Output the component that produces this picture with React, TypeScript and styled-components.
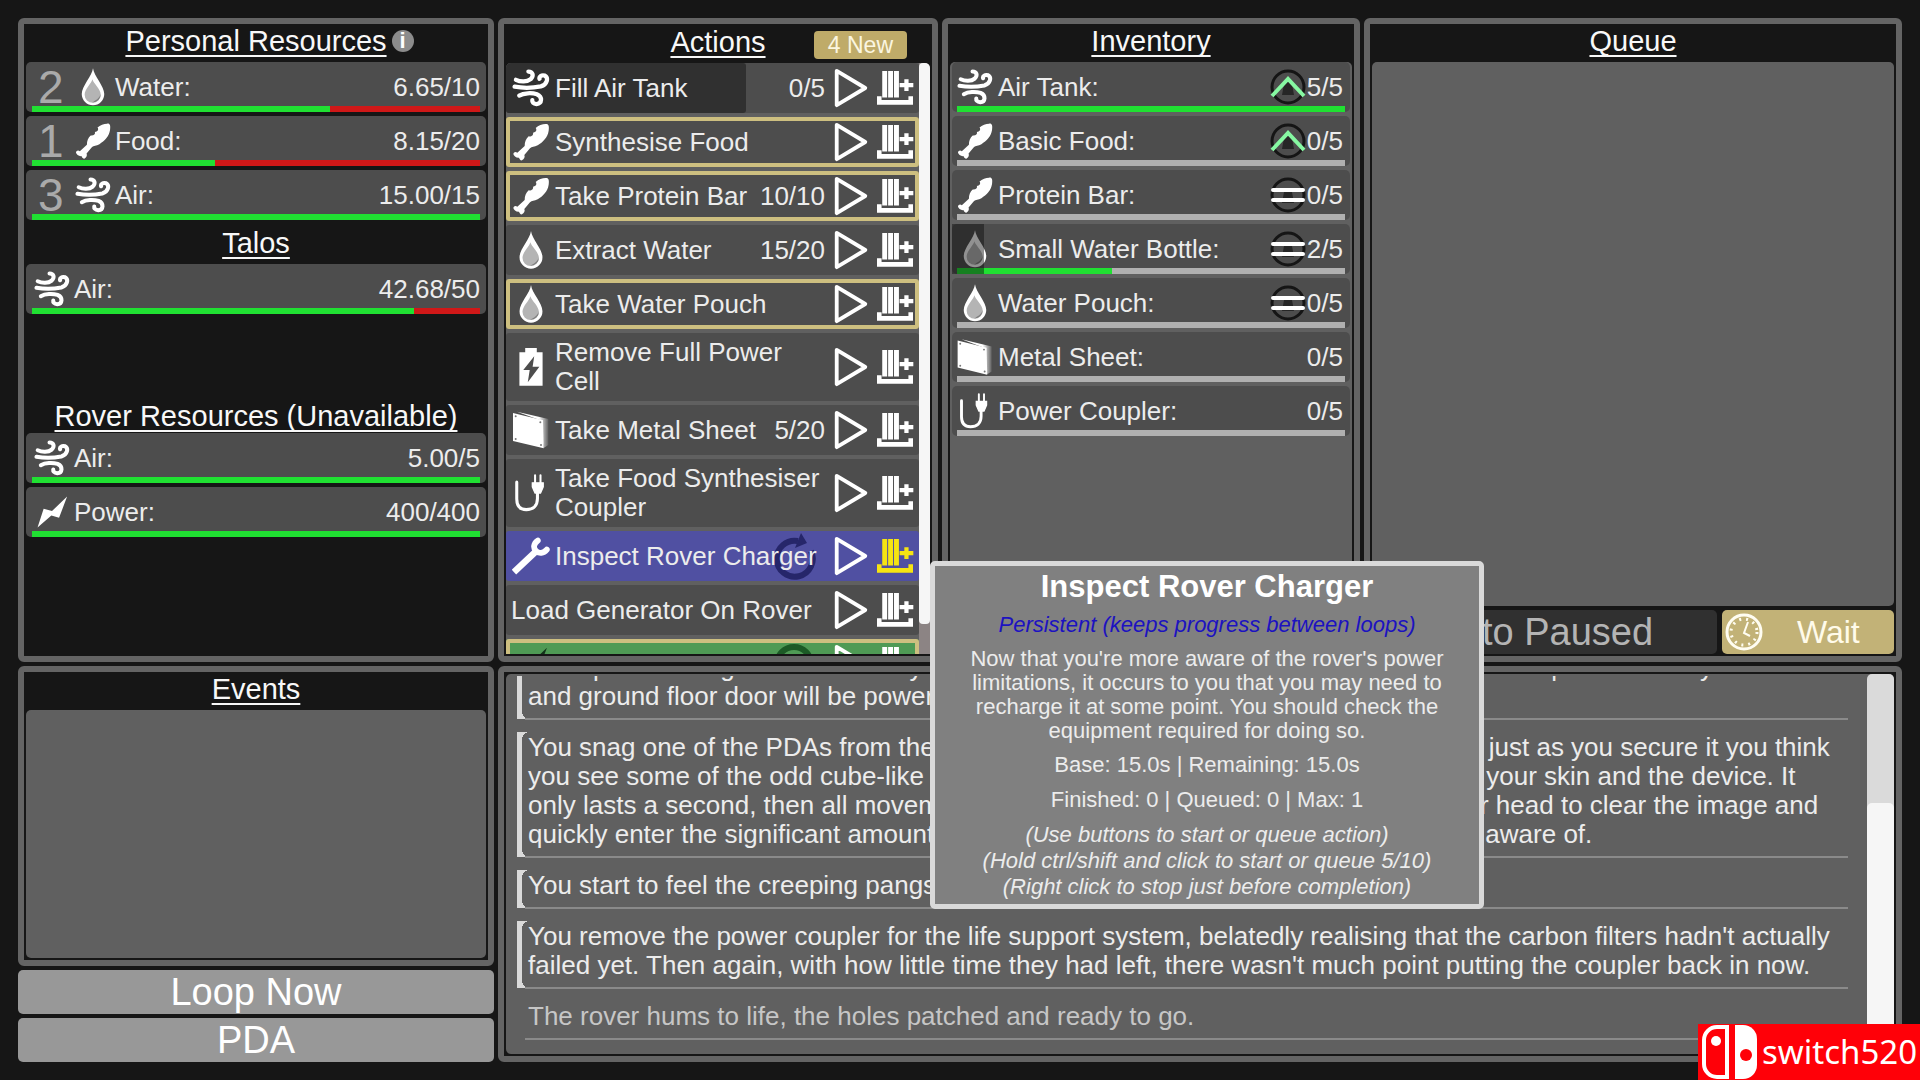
import React from "react";
import styled, { createGlobalStyle, css } from "styled-components";

const color = {
  page: "#161616",
  frame: "#646464",
  well: "#606060",
  row: "#4d4d4d",
  rowDark: "#303030",
  text: "#ececec",
  dim: "#aaaaaa",
  gold: "#c2b277",
  goldEdge: "#cdbf80",
  good: "#20e032",
  bad: "#d01818",
};

const GlobalStyle = createGlobalStyle`
  *, *::before, *::after { box-sizing: border-box; }
  body {
    margin: 0;
    background: ${color.page};
    color: ${color.text};
    font-family: "Liberation Sans", Arial, sans-serif;
    font-size: 26px;
    line-height: 29px;
    overflow: hidden;
  }
  button { font: inherit; color: inherit; border: 0; padding: 0; background: none; cursor: pointer; }
  ul { list-style: none; margin: 0; padding: 0; }
  h2, p { margin: 0; font-weight: normal; }
`;

/* ---------- icons ---------- */

type IconName = "water" | "food" | "air" | "power" | "battery" | "sheet" | "plug" | "wrench";

const Svg = styled.svg`
  display: block;
  width: 100%;
  height: 100%;
`;

const Drop = () => (
  <Svg viewBox="-20 0 112 116">
    <path d="M36 0C39 25 71 55 71 80A35 35 0 0 1 1 80C1 55 33 25 36 0Z" fill="#fff" />
    <path d="M34 34C38 48 60 64 60 82A25 25 0 0 1 10 82C10 64 31 48 34 34Z" fill="#b4b4b4" />
    <path d="M60 80A25 25 0 0 1 34 106C44 100 56 94 60 80Z" fill="#7d7d7d" />
  </Svg>
);

const Food = () => (
  <Svg viewBox="-2 -1 112 114">
    <path
      fill="#fff"
      d="M98 2C107 1 109 8 107 22C104 42 90 56 74 66C64 72 56 70 51 75L34 95C37 101 33 108 27 111C22 112 20 107 18 103C10 104 2 98 1 92C2 86 8 84 13 88L35 68C35 56 39 46 47 39C56 40 62 35 60 28C68 27 73 21 68 14C76 6 88 2 98 2Z"
    />
  </Svg>
);

const Air = () => (
  <Svg viewBox="-2 -1 116 116" fill="none" stroke="#fff" strokeWidth="13" strokeLinecap="round">
    <path d="M10 32C24 39 44 39 55 30C66 19 61 7 48 7" />
    <path d="M6 53C34 58 66 56 86 52C106 46 110 26 98 19C88 16 80 22 82 29" />
    <path d="M20 80C34 72 58 71 74 76C92 84 90 105 73 106C63 105 59 100 60 94" />
  </Svg>
);

const Power = ({ fill = "#fff" }: { fill?: string }) => (
  <Svg viewBox="-10 -5 112 106">
    <path fill={fill} d="M93 0L68 66L44 59L1 96L20 38L46 45Z" />
  </Svg>
);

const Battery = () => (
  <Svg viewBox="-20 0 112 118">
    <path fill="#fff" d="M18 0H54V13H72V117H0V13H18Z" />
    <path fill={color.row} d="M46 26L12 68H32L26 106L62 58H41Z" />
  </Svg>
);

const Sheet = () => (
  <Svg viewBox="0 0 112 114">
    <defs>
      <linearGradient id="sheetEdge" x1="0" x2="1">
        <stop offset="0.7" stopColor="#fff" />
        <stop offset="1" stopColor="#fff" stopOpacity="0.1" />
      </linearGradient>
    </defs>
    <path fill="url(#sheetEdge)" d="M14 2L108 24V102L94 111L84 28Z" />
    <path fill="#fff" d="M2 6L92 28L94 112L2 90Z" />
    {[[10, 16], [84, 34], [10, 84], [86, 102]].map(([x, y]) => (
      <circle key={`${x}-${y}`} cx={x} cy={y} r="3" fill="#777" />
    ))}
  </Svg>
);

const Plug = () => (
  <Svg viewBox="-8 -2 112 112" fill="none" stroke="#fff" strokeLinecap="round">
    <path strokeWidth="9" d="M6 22V72C6 94 16 103 34 103C54 103 67 92 67 70V50" />
    <path fill="#fff" strokeWidth="4" d="M52 24H84V36L76 54H60L52 36Z" />
    <path strokeWidth="6" d="M60 2V24M76 2V24" />
  </Svg>
);

const Wrench = () => (
  <Svg viewBox="0 0 118 116" fill="none" stroke="#fff" strokeLinecap="round" strokeLinejoin="round">
    <path strokeWidth="20" strokeLinecap="butt" d="M6 108L72 46" />
    <path strokeWidth="18" d="M80 10C66 20 66 34 74 42C84 52 98 50 108 38" />
  </Svg>
);

const glyphs: Record<IconName, React.FC> = {
  water: Drop,
  food: Food,
  air: Air,
  power: () => <Power />,
  battery: Battery,
  sheet: Sheet,
  plug: Plug,
  wrench: Wrench,
};

const PlayIcon = () => (
  <Svg viewBox="0 0 36 42">
    <path d="M3 3L33 21L3 39Z" fill="none" stroke="#fff" strokeWidth="4" strokeLinejoin="round" />
  </Svg>
);

const EnqueueIcon = ({ tint = "#fff" }: { tint?: string }) => (
  <Svg viewBox="0 0 112 110">
    <path fill={tint} d="M17 3H32V84H17ZM35 3H50V84H35ZM53 3H68V84H53Z" />
    <path d="M70 46H112M91 28V64" stroke={tint} strokeWidth="13" />
    <path d="M8 80V99H104V80" fill="none" stroke={tint} strokeWidth="14" />
  </Svg>
);

const RepeatIcon = () => (
  <Svg viewBox="0 0 44 50">
    <path d="M39 20A18 18 0 1 1 26 10" fill="none" stroke="#26266a" strokeWidth="6" />
    <path d="M29 2L35 12L23 17Z" fill="#26266a" />
  </Svg>
);

const LoopedIcon = () => (
  <Svg viewBox="0 0 44 50">
    <circle cx="22" cy="25" r="17" fill="none" stroke="#1c5a26" strokeWidth="6" />
  </Svg>
);

const TrendIcon = ({ rising }: { rising: boolean }) => (
  <Svg viewBox="0 0 36 36">
    <circle cx="18" cy="18" r="16" fill="none" stroke="#151515" strokeWidth="3" />
    <path d="M14 15A4 4 0 0 1 22 15L24 26H12Z" fill="#262626" />
    {rising ? (
      <path d="M2 27L18 10L34 27" fill="none" stroke="#86f8a2" strokeWidth="4" />
    ) : (
      <path d="M3 13H33M3 23H33" stroke="#fff" strokeWidth="4" strokeLinecap="round" />
    )}
  </Svg>
);

const ClockIcon = () => (
  <Svg viewBox="0 0 38 38" fill="none" stroke="#fffdf2">
    <circle cx="19" cy="19" r="17" strokeWidth="3" />
    <circle cx="19" cy="19" r="13" strokeWidth="3" strokeDasharray="2 5" />
    <path d="M23 9L19 20L25 23" strokeWidth="2" />
  </Svg>
);

/* ---------- layout ---------- */

const Page = styled.div`
  position: relative;
  display: grid;
  grid-template-columns: minmax(0, 476fr) minmax(0, 1404fr);
  grid-template-rows: minmax(0, 644fr) minmax(0, 396fr);
  gap: 4px;
  height: 100vh;
  padding: 18px;
`;

const TopColumns = styled.div`
  display: grid;
  grid-template-columns: minmax(0, 440fr) minmax(0, 418fr) minmax(0, 538fr);
  gap: 4px;
`;

const SideColumn = styled.div`
  display: flex;
  flex-direction: column;
  gap: 4px;
`;

const Panel = styled.section`
  display: flex;
  flex: 1;
  flex-direction: column;
  min-height: 0;
  padding: 0 2px 2px;
  background: ${color.page};
  border: 6px solid ${color.frame};
  border-radius: 6px;
`;

const HeadingRow = styled.div<{ $compact?: boolean }>`
  display: grid;
  grid-template-columns: 1fr auto 1fr;
  align-items: center;
  padding-bottom: ${(p) => (p.$compact ? 0 : 4)}px;
`;

const Heading = styled.h2`
  grid-column: 2;
  color: #f8f8f8;
  font-size: 29px;
  line-height: 34px;
  text-decoration: underline;
  text-decoration-thickness: 2px;
  text-underline-offset: 4px;
  text-decoration-skip-ink: none;
`;

const InfoButton = styled.button`
  width: 22px;
  height: 22px;
  margin-left: 5px;
  border-radius: 50%;
  background: #8c8c8c;
  color: #fff;
  font-size: 22px;
  font-weight: bold;
  line-height: 22px;
`;

const NewBadge = styled.button`
  justify-self: end;
  height: 28px;
  margin: 7px 23px 0 0;
  padding: 0 14px;
  border-radius: 4px;
  background: #bfab69;
  color: #fbf6e0;
  font-size: 23px;
  line-height: 28px;
`;

const Well = styled.div`
  flex: 1;
  min-height: 0;
  background: ${color.well};
  border-radius: 5px;
`;

const IconBox = styled.span`
  flex: none;
  width: 36px;
  height: 38px;
`;

/* ---------- resources ---------- */

const ResourceGroup = styled.section<{ $roomy?: boolean }>`
  ${(p) => p.$roomy && css`
    min-height: 179px;
    padding-top: 6px;
  `}
`;

const MeterList = styled.ul`
  display: flex;
  flex-direction: column;
  gap: 4px;
`;

const MeterRow = styled.li`
  position: relative;
  display: flex;
  flex-direction: column;
  padding: 6px 6px 0;
  background: ${color.row};
  border-radius: 5px;
`;

const MeterContent = styled.div`
  display: flex;
  align-items: center;
  gap: 4px;
  height: 38px;
  padding-left: 2px;
`;

const Priority = styled.span`
  width: 37px;
  padding-left: 4px;
  color: ${color.dim};
  font-size: 46px;
  line-height: 38px;
`;

const Label = styled.span`
  flex: 1;
`;

const Meter = styled.div<{ $rest: string }>`
  height: 6px;
  background: ${(p) => p.$rest};
`;

const MeterFill = styled.div`
  height: 100%;
  background: ${color.good};
`;

interface Resource {
  name: string;
  icon: IconName;
  value: string;
  share: number;
  priority?: number;
}

const ResourceRow = ({ name, icon, value, share, priority }: Resource) => {
  const Glyph = glyphs[icon];
  return (
    <MeterRow>
      <MeterContent>
        {priority && <Priority>{priority}</Priority>}
        <IconBox><Glyph /></IconBox>
        <Label>{name}:</Label>
        <span>{value}</span>
      </MeterContent>
      <Meter $rest={color.bad}>
        <MeterFill style={{ width: `${share * 100}%` }} />
      </Meter>
    </MeterRow>
  );
};

const personal: Resource[] = [
  { name: "Water", icon: "water", value: "6.65/10", share: 0.665, priority: 2 },
  { name: "Food", icon: "food", value: "8.15/20", share: 0.4075, priority: 1 },
  { name: "Air", icon: "air", value: "15.00/15", share: 1, priority: 3 },
];
const talos: Resource[] = [{ name: "Air", icon: "air", value: "42.68/50", share: 0.8536 }];
const rover: Resource[] = [
  { name: "Air", icon: "air", value: "5.00/5", share: 1 },
  { name: "Power", icon: "power", value: "400/400", share: 1 },
];

/* ---------- actions ---------- */

const ScrollArea = styled.div`
  display: flex;
  flex: 1;
  min-height: 0;
  overflow: hidden;
  background: ${color.well};
  border-radius: 5px 5px 0 0;
`;

const ActionList = styled.ul`
  display: flex;
  flex: 1;
  flex-direction: column;
  gap: 4px;
  overflow: hidden;
`;

const tones = { plain: color.row, active: "#5050a2", done: "#4f9a55" };

const ActionRow = styled.li<{ $tone: keyof typeof tones; $fresh?: boolean }>`
  position: relative;
  display: flex;
  flex: none;
  align-items: center;
  gap: 4px;
  min-height: 50px;
  padding: 5px;
  background: ${(p) => tones[p.$tone]};
  border-radius: 3px;
  ${(p) => p.$fresh && css`box-shadow: inset 0 0 0 4px ${color.goldEdge};`}
`;

const ActionProgress = styled.div`
  position: absolute;
  inset: 0 auto 0 0;
  background: ${color.rowDark};
  border-radius: 3px;
`;

const RepeatMark = styled.span`
  position: absolute;
  top: 0;
  right: 103px;
  width: 44px;
  height: 50px;
`;

const ActionIcon = styled(IconBox)`
  position: relative;
  width: 38px;
  margin: 0 1px;
`;

const ActionLabel = styled(Label)`
  position: relative;
`;

const ActionCount = styled.span`
  position: relative;
`;

const PlayButton = styled.button`
  flex: none;
  width: 36px;
  height: 40px;
  margin-left: 4px;
`;

const EnqueueButton = styled.button`
  flex: none;
  width: 38px;
  height: 36px;
  margin-left: 3px;
`;

const ActionScroll = styled.div`
  width: 11px;
  background: #8c8484;
`;

const ActionThumb = styled.div`
  height: 95%;
  background: #f6f6f6;
  border-radius: 4px;
`;

interface Action {
  name: string;
  icon?: IconName;
  count?: string;
  fresh?: boolean;
  progress?: number;
  tone?: keyof typeof tones;
}

const actions: Action[] = [
  { name: "Fill Air Tank", icon: "air", count: "0/5", progress: 0.58 },
  { name: "Synthesise Food", icon: "food", fresh: true },
  { name: "Take Protein Bar", icon: "food", count: "10/10", fresh: true },
  { name: "Extract Water", icon: "water", count: "15/20" },
  { name: "Take Water Pouch", icon: "water", fresh: true },
  { name: "Remove Full Power Cell", icon: "battery" },
  { name: "Take Metal Sheet", icon: "sheet", count: "5/20" },
  { name: "Take Food Synthesiser Coupler", icon: "plug" },
  { name: "Inspect Rover Charger", icon: "wrench", tone: "active" },
  { name: "Load Generator On Rover" },
];

const ActionItem = ({ name, icon, count, fresh, progress, tone = "plain" }: Action) => {
  const Glyph = icon && glyphs[icon];
  const active = tone === "active";
  return (
    <ActionRow $tone={tone} $fresh={fresh}>
      {progress && <ActionProgress style={{ width: `${progress * 100}%` }} />}
      {active && <RepeatMark><RepeatIcon /></RepeatMark>}
      {Glyph && <ActionIcon><Glyph /></ActionIcon>}
      <ActionLabel>{name}</ActionLabel>
      {count && <ActionCount>{count}</ActionCount>}
      <PlayButton aria-label={`Start ${name}`}><PlayIcon /></PlayButton>
      <EnqueueButton aria-label={`Queue ${name}`}>
        <EnqueueIcon tint={active ? "#f6e412" : undefined} />
      </EnqueueButton>
    </ActionRow>
  );
};

/* ---------- inventory ---------- */

const InventoryWell = styled(Well)`
  padding: 0 2px;
`;

const InventoryRow = styled(MeterRow)`
  padding: 6px 5px 0;
`;

const InventoryContent = styled(MeterContent)`
  gap: 5px;
  padding: 0 2px 0 0;
`;

const Trend = styled.span`
  width: 36px;
  height: 36px;
  margin-right: -4px;
`;

const UseProgress = styled.div`
  position: absolute;
  inset: 0 auto 0 0;
  background: rgba(10, 10, 10, 0.45);
`;

interface Item {
  name: string;
  icon: IconName;
  held: number;
  trend?: "up" | "flat";
  using?: number;
}

const items: Item[] = [
  { name: "Air Tank", icon: "air", held: 5, trend: "up" },
  { name: "Basic Food", icon: "food", held: 0, trend: "up" },
  { name: "Protein Bar", icon: "food", held: 0, trend: "flat" },
  { name: "Small Water Bottle", icon: "water", held: 2, trend: "flat", using: 0.08 },
  { name: "Water Pouch", icon: "water", held: 0, trend: "flat" },
  { name: "Metal Sheet", icon: "sheet", held: 0 },
  { name: "Power Coupler", icon: "plug", held: 0 },
];

const InventoryItem = ({ name, icon, held, trend, using }: Item) => {
  const Glyph = glyphs[icon];
  return (
    <InventoryRow>
      <InventoryContent>
        <IconBox><Glyph /></IconBox>
        <Label>{name}:</Label>
        {trend && <Trend><TrendIcon rising={trend === "up"} /></Trend>}
        <span>{held}/5</span>
      </InventoryContent>
      <Meter $rest="#b0b0b0">
        <MeterFill style={{ width: `${(held / 5) * 100}%` }} />
      </Meter>
      {using && <UseProgress style={{ width: `${using * 100}%` }} />}
    </InventoryRow>
  );
};

/* ---------- queue ---------- */

const QueueControls = styled.div`
  display: grid;
  grid-template-columns: 2fr 1fr;
  gap: 5px;
  height: 44px;
  margin-top: 4px;
`;

const PauseButton = styled.button`
  border-radius: 5px;
  background: ${color.rowDark};
  color: #b4b4b4;
  font-size: 38px;
  line-height: 44px;
`;

const WaitButton = styled.button`
  display: flex;
  align-items: center;
  padding-left: 3px;
  border-radius: 5px;
  background: ${color.gold};
  color: #fffbea;
  font-size: 32px;
`;

const ClockBox = styled.span`
  width: 38px;
  height: 38px;
`;

/* ---------- side buttons ---------- */

const WideButton = styled.button`
  height: 44px;
  border-radius: 5px;
  background: #989898;
  color: #fff;
  font-size: 38px;
  line-height: 42px;
`;

/* ---------- log ---------- */

const LogPanel = styled(Panel)`
  flex-direction: row;
  padding: 2px;
`;

const LogArea = styled(Well)`
  display: flex;
  border-radius: 5px;
`;

const LogEntries = styled.div`
  display: flex;
  flex: 1;
  flex-direction: column;
  justify-content: flex-end;
  overflow: hidden;
  margin-top: 2px;
  padding: 0 19px 16px 11px;
`;

const LogEntry = styled.article<{ $unread?: boolean }>`
  position: relative;
  flex: none;
  margin-top: 14px;
  padding: 1px 0 7px 11px;
  color: ${(p) => (p.$unread ? color.text : "#c6c6c6")};

  &::after {
    content: "";
    position: absolute;
    inset: auto 0 -2px 8px;
    height: 2px;
    background: #8a8a8a;
  }

  ${(p) => p.$unread && css`
    &::before {
      content: "";
      position: absolute;
      inset: 0 auto -1px 0;
      width: 13px;
      background: radial-gradient(ellipse 8px 7px at 13px 7px, ${color.well} 98%, transparent) 0 0 / 13px 7px no-repeat,
        radial-gradient(ellipse 8px 7px at 13px 0, ${color.well} 98%, transparent) 0 100% / 13px 7px no-repeat,
        linear-gradient(90deg, #dadada 5px, ${color.well} 5px) 0 7px / 100% calc(100% - 14px) no-repeat,
        #dadada;
    }
  `}
`;

const LogText = styled.p`
  position: relative;
  white-space: pre-line;
`;

const LogScroll = styled.div`
  display: flex;
  flex: none;
  flex-direction: column;
  justify-content: flex-end;
  width: 27px;
  background: #dadada;
  border-radius: 5px;
`;

const LogThumb = styled.div`
  height: 66%;
  background: #f6f6f6;
  border-radius: 5px 5px 0 0;
`;

const log = [
  {
    unread: true,
    text: `The spare casting should securely hold the blocks in place while you reconnect the main power entirely
and ground floor door will be powered for now.`,
  },
  {
    unread: true,
    text: `You snag one of the PDAs from the benches, strapping it to your suit's forearm, but just as you secure it you think
you see some of the odd cube-like shapes in your mind, suddenly moving between your skin and the device. It
only lasts a second, then all movement around them stops abruptly. You shake your head to clear the image and
quickly enter the significant amount of information on the facility that you're already aware of.`,
  },
  { unread: true, text: "You start to feel the creeping pangs of hunger." },
  {
    unread: true,
    text: `You remove the power coupler for the life support system, belatedly realising that the carbon filters hadn't actually
failed yet. Then again, with how little time they had left, there wasn't much point putting the coupler back in now.`,
  },
  { unread: false, text: "The rover hums to life, the holes patched and ready to go." },
];

/* ---------- overlays ---------- */

const Tooltip = styled.aside`
  position: absolute;
  left: 930px;
  top: 561px;
  display: flex;
  flex-direction: column;
  gap: 9px;
  width: 554px;
  padding: 4px 26px;
  background: #808080;
  border: 5px solid #d9d9d9;
  border-radius: 5px;
  font-size: 22px;
  line-height: 26px;
  text-align: center;
`;

const TooltipTitle = styled.h2`
  color: #fff;
  font-size: 31px;
  font-weight: bold;
  line-height: 33px;
`;

const Persistent = styled.p`
  color: #1c12c0;
  font-style: italic;
`;

const Description = styled.p`
  line-height: 24px;
`;

const Hints = styled.p`
  font-style: italic;
  white-space: pre-line;
`;

const Watermark = styled.div`
  position: fixed;
  right: 0;
  bottom: 0;
  display: flex;
  align-items: center;
  gap: 4px;
  width: 222px;
  height: 56px;
  padding-left: 4px;
  background: #ff0008;
  color: #fff;
  font-family: "Noto Sans", "Open Sans", sans-serif;
  font-size: 33px;
  line-height: 56px;
`;

const LogoBox = styled.span`
  flex: none;
  width: 56px;
  height: 54px;
`;

const SwitchLogo = () => (
  <Svg viewBox="0 0 56 54">
    <path d="M25 2H15A13 13 0 0 0 2 15V39A13 13 0 0 0 15 52H25Z" fill="none" stroke="#fff" strokeWidth="4" />
    <circle cx="14" cy="16" r="5" fill="#fff" />
    <path d="M33 0H41A14 14 0 0 1 55 14V40A14 14 0 0 1 41 54H33Z" fill="#fff" />
    <circle cx="44" cy="30" r="6" fill="#ff0008" />
  </Svg>
);

export default function App() {
  return (
    <>
      <GlobalStyle />
      <Page>
        <Panel>
          <ResourceGroup>
            <HeadingRow>
              <Heading>Personal Resources</Heading>
              <InfoButton aria-label="About personal resources">i</InfoButton>
            </HeadingRow>
            <MeterList>{personal.map((r) => <ResourceRow key={r.name} {...r} />)}</MeterList>
          </ResourceGroup>
          <ResourceGroup $roomy>
            <HeadingRow><Heading>Talos</Heading></HeadingRow>
            <MeterList>{talos.map((r) => <ResourceRow key={r.name} {...r} />)}</MeterList>
          </ResourceGroup>
          <ResourceGroup>
            <HeadingRow $compact><Heading>Rover Resources (Unavailable)</Heading></HeadingRow>
            <MeterList>{rover.map((r) => <ResourceRow key={r.name} {...r} />)}</MeterList>
          </ResourceGroup>
        </Panel>

        <TopColumns>
          <Panel>
            <HeadingRow>
              <Heading>Actions</Heading>
              <NewBadge>4 New</NewBadge>
            </HeadingRow>
            <ScrollArea>
              <ActionList>
                {actions.map((a) => <ActionItem key={a.name} {...a} />)}
                <ActionRow $tone="done" $fresh>
                  <RepeatMark><LoopedIcon /></RepeatMark>
                  <ActionIcon><Power fill="#12331a" /></ActionIcon>
                  <ActionLabel />
                  <PlayButton aria-label="Start charging"><PlayIcon /></PlayButton>
                  <EnqueueButton aria-label="Queue charging"><EnqueueIcon /></EnqueueButton>
                </ActionRow>
              </ActionList>
              <ActionScroll><ActionThumb /></ActionScroll>
            </ScrollArea>
          </Panel>
          <Panel>
            <HeadingRow><Heading>Inventory</Heading></HeadingRow>
            <InventoryWell>
              <MeterList>{items.map((i) => <InventoryItem key={i.name} {...i} />)}</MeterList>
            </InventoryWell>
          </Panel>
          <Panel>
            <HeadingRow><Heading>Queue</Heading></HeadingRow>
            <Well />
            <QueueControls>
              <PauseButton>Auto Paused</PauseButton>
              <WaitButton>
                <ClockBox><ClockIcon /></ClockBox>
                <Label>Wait</Label>
              </WaitButton>
            </QueueControls>
          </Panel>
        </TopColumns>

        <SideColumn>
          <Panel>
            <HeadingRow><Heading>Events</Heading></HeadingRow>
            <Well />
          </Panel>
          <WideButton>Loop Now</WideButton>
          <WideButton>PDA</WideButton>
        </SideColumn>

        <LogPanel>
          <LogArea>
            <LogEntries>
              {log.map((entry) => (
                <LogEntry key={entry.text} $unread={entry.unread}>
                  <LogText>{entry.text}</LogText>
                </LogEntry>
              ))}
            </LogEntries>
            <LogScroll><LogThumb /></LogScroll>
          </LogArea>
        </LogPanel>

        <Tooltip role="tooltip">
          <TooltipTitle>Inspect Rover Charger</TooltipTitle>
          <Persistent>Persistent (keeps progress between loops)</Persistent>
          <Description>
            Now that you're more aware of the rover's power limitations, it occurs to you that you may need to
            recharge it at some point. You should check the equipment required for doing so.
          </Description>
          <p>Base: 15.0s | Remaining: 15.0s</p>
          <p>Finished: 0 | Queued: 0 | Max: 1</p>
          <Hints>{`(Use buttons to start or queue action)
(Hold ctrl/shift and click to start or queue 5/10)
(Right click to stop just before completion)`}</Hints>
        </Tooltip>
      </Page>
      <Watermark>
        <LogoBox><SwitchLogo /></LogoBox>
        switch520
      </Watermark>
    </>
  );
}
